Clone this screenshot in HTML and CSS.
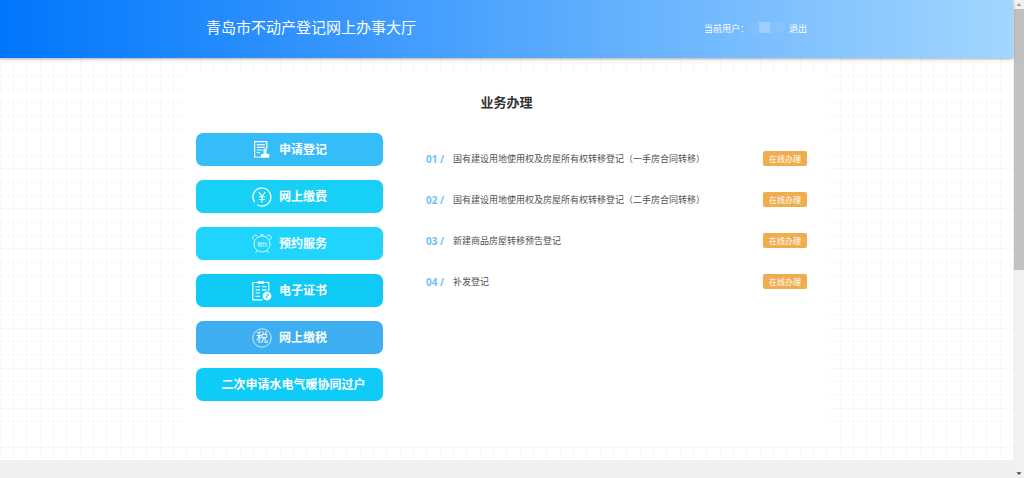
FILE: index.html
```html
<!DOCTYPE html>
<html lang="zh-CN">
<head>
<meta charset="utf-8">
<title>青岛市不动产登记网上办事大厅</title>
<link rel="stylesheet" href="styles.css">
</head>
<body>
<div class="viewport">
  <div class="page">
    <header class="header">
      <div class="header-inner">
        <h1 class="site-title">青岛市不动产登记网上办事大厅</h1>
        <div class="user">
          <span>当前用户：</span>
          <span class="user-mask"><i class="mask-a"></i><i class="mask-b"></i><i class="mask-c"></i></span>
          <a class="logout" href="#">退出</a>
        </div>
      </div>
    </header>
    <main class="main">
      <section class="panel">
        <h2 class="panel-title">业务办理</h2>
        <div class="columns">
          <nav class="menu">
            <button class="menu-item apply" type="button">
              <svg class="icon" viewBox="0 0 20 20" fill="none" stroke="#fff" stroke-width="1.2"><path d="M9.500 17H2.600V1.600H14.800V9M4.800 4.600h8M4.800 7.300h8M4.800 10h5.500M4.800 12.700h3.500"/><path d="M13 8.500a1.900 1.900 0 0 1 1.300 3.200l.3 2.300h2.600v3.800H9v-3.800h2.400l.3-2.300A1.900 1.900 0 0 1 13 8.500z" fill="#fff" stroke="none"/></svg>
              <span>申请登记</span>
            </button>
            <button class="menu-item pay" type="button">
              <svg class="icon" viewBox="0 0 20 20" fill="none" stroke="#fff"><path d="M2.600 15.200A9 9 0 1 1 5.300 17.700M1.500 12.500l.5 1.500" stroke-width="1.300"/><path d="M6.700 5l3.300 4.600L13.300 5M10 9.600v5.900M7 10h6M7 12.500h6" stroke-width="1.100"/></svg>
              <span>网上缴费</span>
            </button>
            <button class="menu-item booking" type="button">
              <svg class="icon" viewBox="0 0 20 20" fill="none" stroke="#fff" stroke-width=".8"><circle cx="10" cy="10" r="8"/><path d="M1.500 5.700A2.700 2.700 0 0 1 5.500 2M14.500 2A2.700 2.700 0 0 1 18.500 5.700M10 .500v1.600M8.500.700h3M5 16.500l-1.300 2.500M15 16.500l1.300 2.500"/><text class="icon-small" x="10" y="12" text-anchor="middle">预约</text></svg>
              <span>预约服务</span>
            </button>
            <button class="menu-item cert" type="button">
              <svg class="icon" viewBox="0 0 20 20" fill="none" stroke="#fff"><path d="M10.500 18.900H.8V1.500H16.700V10" stroke-width="1.200"/><path d="M5.800.200h6v2.700h-6z" fill="#fff" stroke="none"/><path d="M3.500 5.700h4.500M10 5.700h4.500M3.500 8.900h4.500M10 8.900h4.500M3.500 12h4.500M3.500 15.200h4.500" stroke-width="1.100"/><circle cx="15" cy="15" r="4.400" fill="#fff" stroke="none"/><path d="M14 17l.4-1.800 1.900-2.400.7.600-1.900 2.500z" stroke="#0fc9f6" stroke-width=".8"/></svg>
              <span>电子证书</span>
            </button>
            <button class="menu-item tax" type="button">
              <svg class="icon" viewBox="0 0 20 20" fill="none" stroke="#fff" stroke-width=".8"><circle cx="10" cy="10" r="9.200"/><text class="icon-char" x="10" y="14.300" text-anchor="middle">税</text></svg>
              <span>网上缴税</span>
            </button>
            <button class="menu-item transfer" type="button"><span>二次申请水电气暖协同过户</span></button>
          </nav>
          <ol class="services">
            <li class="service"><span class="num">01 /</span><span class="name">国有建设用地使用权及房屋所有权转移登记（一手房合同转移）</span><button class="online" type="button">在线办理</button></li>
            <li class="service"><span class="num">02 /</span><span class="name">国有建设用地使用权及房屋所有权转移登记（二手房合同转移）</span><button class="online" type="button">在线办理</button></li>
            <li class="service"><span class="num">03 /</span><span class="name">新建商品房屋转移预告登记</span><button class="online" type="button">在线办理</button></li>
            <li class="service"><span class="num">04 /</span><span class="name">补发登记</span><button class="online" type="button">在线办理</button></li>
          </ol>
        </div>
      </section>
    </main>
    <footer class="footer"></footer>
  </div>
  <div class="scrollbar" aria-hidden="true">
    <svg class="arrow" viewBox="0 0 10 9"><path d="M2.500 6L5 3.300 7.500 6z" fill="#999"/></svg>
    <div class="thumb"></div>
    <svg class="arrow arrow-down" viewBox="0 0 10 9"><path d="M2.500 3.300h5L5 6z" fill="#444"/></svg>
  </div>
</div>
</body>
</html>
```
FILE: styles.css
```css
* { box-sizing: border-box; }

body {
  margin: 0;
  background: #f0f0f0;
  color: #505050;
  font-family: "Open Sans", "Noto Sans CJK SC", sans-serif;
  font-size: 9px;
}

h1, h2, ol { margin: 0; padding: 0; }

button {
  border: 0;
  padding: 0;
  color: #fff;
  font-family: inherit;
  cursor: pointer;
}

.viewport { display: flex; min-height: 100vh; }
.page { flex: 1; display: flex; flex-direction: column; }

.header {
  position: relative;
  height: 58px;
  background: linear-gradient(90deg, #0076fc, #a3d6ff);
  box-shadow: 0 1px 3px rgba(0, 0, 0, .35);
  color: #fff;
}

.header-inner {
  display: flex;
  align-items: center;
  justify-content: space-between;
  max-width: 601px;
  height: 54px;
  margin: 0 auto;
}

.site-title { font-size: 15px; font-weight: 400; line-height: 24px; }
.user { display: flex; align-items: center; line-height: 16px; padding-top: 4px; }
.logout { color: #fff; text-decoration: none; }

.user-mask { display: flex; width: 36px; height: 11px; margin: 0 4px 4px 0; }
.mask-a { width: 10px; background: #80bfff; }
.mask-b { width: 11px; background: #a0cfff; }
.mask-c { width: 15px; background: #87c1ff; }

.main {
  flex: 1;
  padding: 14px 16px 13px;
  background-color: #fff;
  background-image:
    linear-gradient(90deg, #f8f8f8 1px, transparent 1px 13px, #f8f8f8 13px 14px, transparent 14px 26px, #f8f8f8 26px 27px, transparent 27px),
    linear-gradient(#f8f8f8 1px, transparent 1px 13px, #f8f8f8 13px 14px, transparent 14px 27px, #f8f8f8 27px 28px, transparent 28px 40px, #f8f8f8 40px 41px, transparent 41px 53px, #f8f8f8 53px 54px, transparent 54px 67px, #f8f8f8 67px 68px, transparent 68px 80px, #f8f8f8 80px 81px, transparent 81px 93px, #f8f8f8 93px 94px, transparent 94px 107px, #f8f8f8 107px 108px, transparent 108px 120px, #f8f8f8 120px 121px, transparent 121px);
  background-size: 40px 100%, 100% 146px;
  background-position: 0 0, 0 97px;
}

.panel {
  max-width: 647px;
  min-height: 375px;
  margin: 0 auto;
  padding: 19px 23px 46px 13px;
  background: #fff;
}

.panel-title {
  padding-left: 10px;
  color: #333;
  font-size: 13px;
  font-weight: 700;
  line-height: 22px;
  text-align: center;
}

.columns { display: flex; gap: 43px; padding-top: 20px; }

.menu { display: flex; flex-direction: column; gap: 14px; width: 187px; }

.menu-item {
  display: flex;
  align-items: center;
  justify-content: center;
  gap: 7px;
  height: 33px;
  border-radius: 7px;
  font-size: 12px;
  font-weight: 700;
  line-height: 20px;
}

.apply { background: #35bdf9; }
.pay { background: #18cff6; }
.booking { background: #20d5fd; }
.cert { background: #0fc9f6; }
.tax { background: #3caef1; }
.transfer { background: #0fcbf7; padding-left: 8px; }

.icon { width: 20px; height: 20px; }
.icon-small { fill: #fff; stroke: none; font-size: 5px; font-weight: 400; }
.icon-char { fill: #fff; stroke: none; font-size: 12px; font-weight: 400; }

.services { flex: 1; padding-top: 5px; list-style: none; }
.service { display: flex; align-items: center; height: 41px; }
.num { width: 27px; color: #6fbfff; font-size: 10px; font-weight: 700; }
.name { flex: 1; white-space: nowrap; }

.online {
  width: 44px;
  height: 15px;
  border-radius: 2px;
  background: #f0ad4e;
  font-size: 8px;
  line-height: 15px;
}

.footer { height: 18px; background: #f0f0f0; }

.scrollbar {
  display: flex;
  flex-direction: column;
  width: 11px;
  padding-left: 1px;
  background: #f1f1f1;
}

.arrow { width: 10px; height: 9px; }
.thumb { height: 261px; background: #c1c1c1; }
.arrow-down { margin-top: auto; }
```
